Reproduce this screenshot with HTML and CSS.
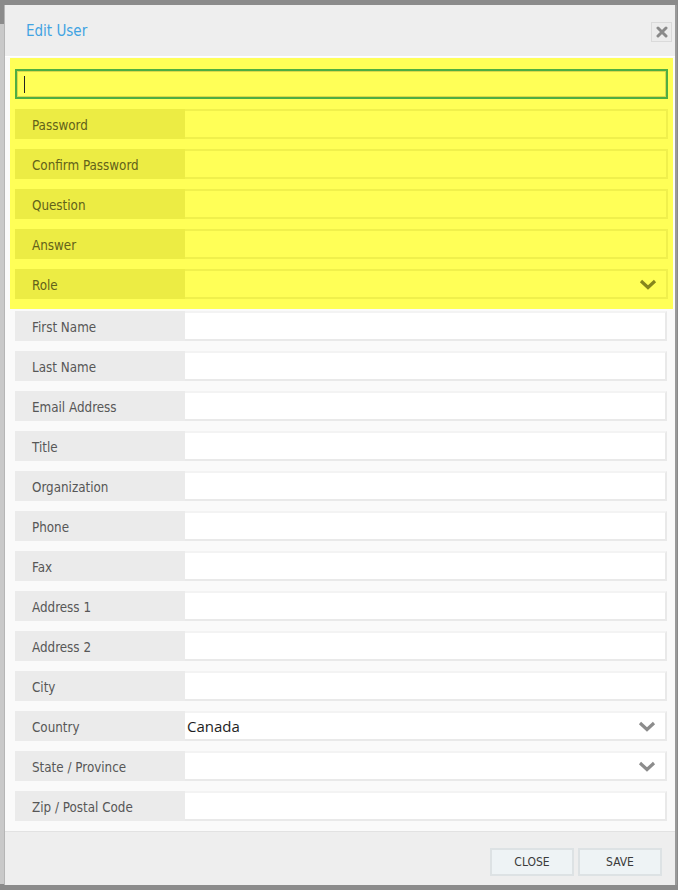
FILE: index.html
```html
<!DOCTYPE html>
<html>
<head>
<meta charset="utf-8">
<link rel="stylesheet" href="styles.css">
</head>
<body>
<div class="page">
  <div class="backdrop-edge"></div>
  <div class="dialog">
    <div class="header">
      <span class="title">Edit User</span>
      <button class="close-x" aria-label="close">
        <svg width="12" height="12" viewBox="0 0 12 12"><path d="M2 2 L10 10 M10 2 L2 10" stroke="#8a8a8a" stroke-width="3" stroke-linecap="round"/></svg>
      </button>
    </div>
    <div class="body">
      <div class="highlight">
        <div class="focus-input"><span class="caret"></span></div>
        <div class="row hl"><div class="label">Password</div><div class="field"></div></div>
        <div class="row hl"><div class="label">Confirm Password</div><div class="field"></div></div>
        <div class="row hl"><div class="label">Question</div><div class="field"></div></div>
        <div class="row hl"><div class="label">Answer</div><div class="field"></div></div>
        <div class="row hl"><div class="label">Role</div><div class="field select"><svg class="chev" width="18" height="11" viewBox="0 0 18 11"><path d="M2 2 L9 8.5 L16 2" fill="none" stroke="currentColor" stroke-width="3.2" stroke-linejoin="miter"/></svg></div></div>
      </div>
      <div class="rows">
        <div class="row"><div class="label">First Name</div><div class="field"></div></div>
        <div class="row"><div class="label">Last Name</div><div class="field"></div></div>
        <div class="row"><div class="label">Email Address</div><div class="field"></div></div>
        <div class="row"><div class="label">Title</div><div class="field"></div></div>
        <div class="row"><div class="label">Organization</div><div class="field"></div></div>
        <div class="row"><div class="label">Phone</div><div class="field"></div></div>
        <div class="row"><div class="label">Fax</div><div class="field"></div></div>
        <div class="row"><div class="label">Address 1</div><div class="field"></div></div>
        <div class="row"><div class="label">Address 2</div><div class="field"></div></div>
        <div class="row"><div class="label">City</div><div class="field"></div></div>
        <div class="row"><div class="label">Country</div><div class="field select"><span class="value">Canada</span><svg class="chev" width="18" height="11" viewBox="0 0 18 11"><path d="M2 2 L9 8.5 L16 2" fill="none" stroke="currentColor" stroke-width="3.2" stroke-linejoin="miter"/></svg></div></div>
        <div class="row"><div class="label">State / Province</div><div class="field select"><svg class="chev" width="18" height="11" viewBox="0 0 18 11"><path d="M2 2 L9 8.5 L16 2" fill="none" stroke="currentColor" stroke-width="3.2" stroke-linejoin="miter"/></svg></div></div>
        <div class="row"><div class="label">Zip / Postal Code</div><div class="field"></div></div>
      </div>
    </div>
    <div class="footer">
      <button class="btn">CLOSE</button>
      <button class="btn">SAVE</button>
    </div>
  </div>
</div>
</body>
</html>
```

FILE: styles.css
```css
html, body {
  margin: 0;
  padding: 0;
}
body {
  background: #8b8b8b;
  width: 678px;
  height: 890px;
  overflow: hidden;
  font-family: "DejaVu Sans Condensed", "Liberation Sans Narrow", "Liberation Sans", sans-serif;
}
.page {
  display: flex;
  align-items: flex-start;
  height: 890px;
}
.backdrop-edge {
  width: 4px;
  margin-top: 24px;
  height: 860px;
  background: #c9c9c9;
  flex: none;
}
.dialog {
  width: 670px;
  margin-top: 5px;
  height: 880px;
  background: #fafafa;
  border-left: 1px solid #b5b5b5;
  border-right: 2px solid #9a9a9a;
  display: flex;
  flex-direction: column;
  flex: none;
}
.header {
  height: 51px;
  flex: none;
  background: #eeeeee;
  border-bottom: 1px solid #ffffff;
  display: flex;
  align-items: center;
  justify-content: space-between;
  padding: 0 3px 0 21px;
}
.title {
  color: #41a3e2;
  font-size: 15px;
  margin-top: 0px;
}
.close-x {
  width: 21px;
  height: 20px;
  padding: 0;
  margin: 3px 0 0 0;
  border: 1px solid #dadada;
  background: #ececec;
  display: flex;
  align-items: center;
  justify-content: center;
}
.body {
  flex: 1;
  display: flex;
  flex-direction: column;
}
.highlight {
  flex: none;
  background: #ffff57;
  margin: 1px 2px 0 5px;
  padding: 11px 5px 10px 5px;
  display: flex;
  flex-direction: column;
  gap: 10px;
}
.focus-input {
  flex: none;
  height: 26px;
  border: 2px solid #4fae42;
  box-shadow: inset 0 0 0 1px #d9d94a;
  display: flex;
  align-items: center;
  padding-left: 7px;
}
.caret {
  width: 1px;
  height: 17px;
  background: #222;
}
.rows {
  flex: none;
  display: flex;
  flex-direction: column;
  gap: 10px;
  margin: 2px 8px 0 10px;
}
.row {
  flex: none;
  display: flex;
  height: 30px;
}
.label {
  width: 153px;
  flex: none;
  background: #ebebeb;
  color: #575757;
  font-size: 13.3px;
  padding: 2px 0 0 17px;
  box-sizing: content-box;
  display: flex;
  align-items: center;
}
.row .label {
  height: 28px;
}
.row.hl .label {
  background: #ecec44;
  color: #62621a;
  padding-top: 3px;
  height: 27px;
}
.field {
  flex: 1;
  background: #ffffff;
  border: 2px solid #e9e9e9;
  border-top-color: #f3f3f3;
  border-left: none;
  display: flex;
  align-items: center;
  justify-content: space-between;
  padding: 0 9px 0 2px;
}
.row.hl .field {
  background: #ffff57;
  border-color: #f0f04c;
}
.field.select {
  justify-content: flex-end;
}
.field .value {
  flex: 1;
  font-family: "Open Sans", "Noto Sans", sans-serif;
  font-size: 15px;
  color: #1e1e1e;
}
.chev {
  color: #8c8c8c;
}
.row.hl .chev {
  color: #86861c;
}
.footer {
  flex: none;
  height: 37px;
  border-top: 1px solid #e2e2e2;
  background: #eeeeee;
  display: flex;
  justify-content: flex-end;
  align-items: flex-start;
  gap: 4px;
  padding: 16px 13px 0 0;
}
.btn {
  width: 84px;
  height: 28px;
  background: #eef3f5;
  border: 2px solid #dde2e4;
  color: #3a3a3a;
  font-family: "DejaVu Sans Condensed", "Liberation Sans Narrow", "Liberation Sans", sans-serif;
  font-size: 12px;
  padding: 0;
}
```
